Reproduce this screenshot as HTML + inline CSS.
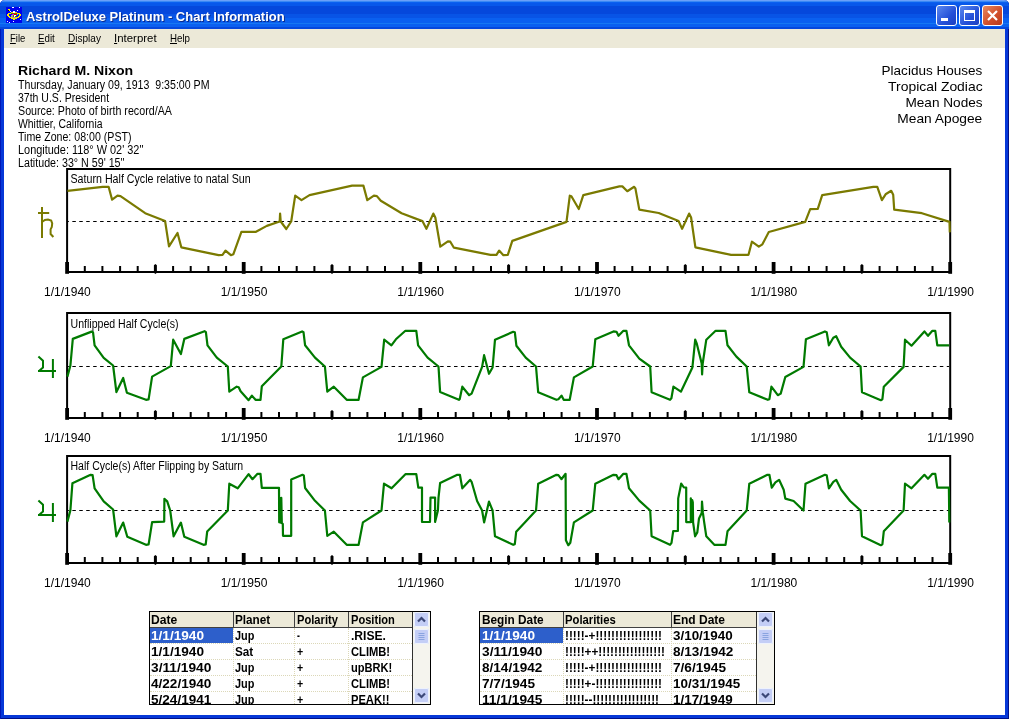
<!DOCTYPE html>
<html><head><meta charset="utf-8"><title>AstrolDeluxe Platinum - Chart Information</title>
<style>
html,body{margin:0;padding:0;}
body{will-change:transform;width:1009px;height:719px;overflow:hidden;background:#fff;position:relative;font-family:"Liberation Sans",sans-serif;color:#000;}
#frame{position:absolute;left:0;top:0;width:1009px;height:719px;background:#0638d8;border-radius:5px 5px 0 0;box-shadow:inset 1px 0 0 #0018b8,inset -1px 0 0 #001088,inset 0 -1px 0 #001088;}
#title{position:absolute;left:0;top:0;width:1009px;height:29px;background:linear-gradient(#6aa0f8 0px,#6aa0f8 1px,#3a88f4 1px,#3a88f4 2px,#0a60f0 2px,#0a60f0 3px,#0858ea 3px,#0858ea 6px,#0548dc 6px,#0548dc 14px,#0854e6 14px,#0854e6 18px,#0a60f0 18px,#0a60f0 23px,#1678f2 23px,#1678f2 24px,#0a60f0 24px,#0a60f0 27px,#0648dc 27px,#0648dc 29px);border-radius:5px 5px 0 0;}
#ttext{transform-origin:0 0;position:absolute;left:26px;top:9px;font-weight:bold;font-size:13px;line-height:16px;color:#fff;white-space:nowrap;text-shadow:1px 1px 0 #0a2a8c;}
#menu{position:absolute;left:4px;top:29px;width:1001px;height:19px;background:#ece9d8;}
#menu span{position:absolute;transform-origin:0 0;display:block;top:3px;font-size:11px;line-height:13px;white-space:nowrap;}
#menu u{text-decoration:underline;}
#client{position:absolute;left:4px;top:48px;width:1001px;height:667px;background:#fff;}
.wb{position:absolute;top:5px;width:21px;height:21px;box-sizing:border-box;border:1px solid #fff;border-radius:3px;}
.info{position:absolute;left:18px;white-space:nowrap;font-size:12px;line-height:13px;transform-origin:0 0;}
.rt{position:absolute;right:26.4px;white-space:nowrap;font-size:13.33px;line-height:16px;text-align:right;transform-origin:100% 0;}
svg text.ct{font-size:12px;font-family:"Liberation Sans",sans-serif;}
svg text.dl{font-size:12px;font-family:"Liberation Sans",sans-serif;}
.tbl{position:absolute;background:#fff;border:1px solid #000;overflow:hidden;font-weight:bold;font-size:12px;}
.hdr{position:absolute;left:0;top:0;height:15px;background:#ece9d8;border-bottom:1px solid #404040;}
.hc{position:absolute;top:0;height:16px;line-height:17px;box-sizing:border-box;border-right:1px solid #404040;white-space:nowrap;overflow:hidden;}
.tbl span{display:inline-block;transform-origin:0 0;}
.c{position:absolute;height:16px;line-height:16px;box-sizing:border-box;white-space:nowrap;overflow:hidden;}
.c.sel{background:#2d5fcb;color:#fff;height:15px;}
.vl{position:absolute;top:16px;width:0;height:80px;border-left:1px dotted #dcd8b8;}
.hl{position:absolute;left:0;height:0;border-top:1px dotted #dcd8b8;}
.sb{position:absolute;top:0;width:18px;height:92px;background:#f5f4ee;border-left:1px solid #303030;box-sizing:border-box;}
.sbtn{position:absolute;width:15px;height:15px;background:#c4cef6;border-radius:2px;box-shadow:inset 0 0 0 1px #eef2fd;}
</style></head><body>
<div id="frame"></div>
<div id="title"></div>
<svg style="position:absolute;left:6px;top:7px" width="16" height="16" viewBox="0 0 16 16" shape-rendering="crispEdges"><rect width="16" height="16" fill="#0000ee"/><rect x="6" y="0" width="2" height="1" fill="#fff"/><rect x="13" y="0" width="1" height="1" fill="#fff"/><rect x="2" y="2" width="2" height="1" fill="#f4ee00"/><rect x="2" y="3" width="1" height="1" fill="#000"/><rect x="3" y="3" width="1" height="1" fill="#f4ee00"/><rect x="11" y="3" width="1" height="1" fill="#fff"/><rect x="4" y="4" width="1" height="1" fill="#fff"/><rect x="7" y="4" width="2" height="1" fill="#fff"/><rect x="5" y="5" width="2" height="1" fill="#f4ee00"/><rect x="7" y="5" width="2" height="1" fill="#fff"/><rect x="9" y="5" width="2" height="1" fill="#f4ee00"/><rect x="2" y="6" width="3" height="1" fill="#f4ee00"/><rect x="5" y="6" width="1" height="1" fill="#00c800"/><rect x="6" y="6" width="1" height="1" fill="#f00000"/><rect x="7" y="6" width="1" height="1" fill="#00c800"/><rect x="8" y="6" width="1" height="1" fill="#f00000"/><rect x="9" y="6" width="1" height="1" fill="#00c800"/><rect x="10" y="6" width="1" height="1" fill="#f00000"/><rect x="11" y="6" width="3" height="1" fill="#f4ee00"/><rect x="1" y="7" width="2" height="1" fill="#f4ee00"/><rect x="6" y="7" width="2" height="1" fill="#f000f0"/><rect x="8" y="7" width="3" height="1" fill="#f00000"/><rect x="11" y="7" width="1" height="1" fill="#00e0f0"/><rect x="13" y="7" width="2" height="1" fill="#f4ee00"/><rect x="1" y="8" width="2" height="1" fill="#f4ee00"/><rect x="5" y="8" width="2" height="1" fill="#a0a0a0"/><rect x="7" y="8" width="1" height="1" fill="#00c800"/><rect x="8" y="8" width="2" height="1" fill="#fff"/><rect x="10" y="8" width="1" height="1" fill="#00c800"/><rect x="13" y="8" width="2" height="1" fill="#f4ee00"/><rect x="2" y="9" width="2" height="1" fill="#f4ee00"/><rect x="5" y="9" width="2" height="1" fill="#a0a0a0"/><rect x="7" y="9" width="1" height="1" fill="#f00000"/><rect x="8" y="9" width="1" height="1" fill="#fff"/><rect x="9" y="9" width="1" height="1" fill="#707000"/><rect x="12" y="9" width="2" height="1" fill="#f4ee00"/><rect x="3" y="10" width="3" height="1" fill="#f4ee00"/><rect x="6" y="10" width="4" height="1" fill="#a0a0a0"/><rect x="10" y="10" width="3" height="1" fill="#f4ee00"/><rect x="5" y="11" width="6" height="1" fill="#f4ee00"/><rect x="7" y="12" width="2" height="1" fill="#f4ee00"/><rect x="14" y="12" width="1" height="1" fill="#fff"/><rect x="1" y="14" width="1" height="1" fill="#fff"/><rect x="7" y="14" width="1" height="1" fill="#fff"/><rect x="3" y="15" width="1" height="1" fill="#fff"/></svg>
<div id="ttext" style="transform:scaleX(0.9973)">AstrolDeluxe Platinum - Chart Information</div>
<div class="wb" style="left:936px;background:linear-gradient(135deg,#5c8af0,#2550d8 60%,#1c3fc0)"><div style="position:absolute;left:4px;top:12px;width:7px;height:3px;background:#fff"></div></div>
<div class="wb" style="left:959px;background:linear-gradient(135deg,#5c8af0,#2550d8 60%,#1c3fc0)"><div style="position:absolute;left:4px;top:4px;width:11px;height:11px;box-sizing:border-box;border:1px solid #fff;border-top:3px solid #fff"></div></div>
<div class="wb" style="left:982px;background:linear-gradient(135deg,#e88a60,#d2502c 55%,#b83a1c)"><svg width="19" height="19" viewBox="0 0 19 19" style="position:absolute;left:0;top:0"><path d="M5 5L14 14M14 5L5 14" stroke="#fff" stroke-width="2.2"/></svg></div>
<div id="menu"><span id="m1" style="transform:scaleX(0.8620);left:5.9px"><u>F</u>ile</span><span id="m2" style="transform:scaleX(0.8857);left:33.7px"><u>E</u>dit</span><span id="m3" style="transform:scaleX(0.9119);left:63.8px"><u>D</u>isplay</span><span id="m4" style="transform:scaleX(1.0394);left:110px"><u>I</u>nterpret</span><span id="m5" style="transform:scaleX(0.8834);left:165.9px"><u>H</u>elp</span></div>
<div id="client"></div>
<div class="info" id="l1" style="transform:scaleX(1.0849);top:63px;font-weight:bold;font-size:13px;line-height:16px;">Richard M. Nixon</div>
<div class="info" id="l2" style="transform:scaleX(0.8842);top:79px">Thursday, January 09, 1913&nbsp; 9:35:00 PM</div>
<div class="info" id="l3" style="transform:scaleX(0.8754);top:92px">37th U.S. President</div>
<div class="info" id="l4" style="transform:scaleX(0.8908);top:105px">Source: Photo of birth record/AA</div>
<div class="info" id="l5" style="transform:scaleX(0.8678);top:118px">Whittier, California</div>
<div class="info" id="l6" style="transform:scaleX(0.8848);top:131px">Time Zone: 08:00 (PST)</div>
<div class="info" id="l7" style="transform:scaleX(0.9087);top:144px">Longitude: 118&deg; W 02' 32''</div>
<div class="info" id="l8" style="transform:scaleX(0.8901);top:157px">Latitude: 33&deg; N 59' 15''</div>
<div class="rt" id="r1" style="transform:scaleX(1.0143);top:63px">Placidus Houses</div>
<div class="rt" id="r2" style="transform:scaleX(1.0428);top:79px">Tropical Zodiac</div>
<div class="rt" id="r3" style="transform:scaleX(1.0201);top:95px">Mean Nodes</div>
<div class="rt" id="r4" style="transform:scaleX(1.0320);top:111px">Mean Apogee</div>
<svg style="position:absolute;left:0;top:0" width="1009" height="719" viewBox="0 0 1009 719">
<rect x="67.1" y="169.0" width="883.1" height="103.0" fill="none" stroke="#000" stroke-width="2"/>
<line x1="68" x2="949" y1="221.5" y2="221.5" stroke="#000" stroke-width="1" stroke-dasharray="3.5 3.44" stroke-dashoffset="2.6"/>
<rect x="65.2" y="262.0" width="3.8" height="11.8" fill="#000"/>
<rect x="83.8" y="266.0" width="2" height="6" fill="#000"/>
<rect x="101.4" y="266.0" width="2" height="6" fill="#000"/>
<rect x="119.1" y="266.0" width="2" height="6" fill="#000"/>
<rect x="136.7" y="266.0" width="2" height="6" fill="#000"/>
<path d="M153.9 265.2 l1.5 -1.2 l1.5 1.2 v7.6 l-1.5 1.2 l-1.5 -1.2z" fill="#000"/>
<rect x="172.1" y="266.0" width="2" height="6" fill="#000"/>
<rect x="189.7" y="266.0" width="2" height="6" fill="#000"/>
<rect x="207.4" y="266.0" width="2" height="6" fill="#000"/>
<rect x="225.1" y="266.0" width="2" height="6" fill="#000"/>
<rect x="241.8" y="262.0" width="3.8" height="11.8" fill="#000"/>
<rect x="260.4" y="266.0" width="2" height="6" fill="#000"/>
<rect x="278.0" y="266.0" width="2" height="6" fill="#000"/>
<rect x="295.7" y="266.0" width="2" height="6" fill="#000"/>
<rect x="313.4" y="266.0" width="2" height="6" fill="#000"/>
<path d="M330.5 265.2 l1.5 -1.2 l1.5 1.2 v7.6 l-1.5 1.2 l-1.5 -1.2z" fill="#000"/>
<rect x="348.7" y="266.0" width="2" height="6" fill="#000"/>
<rect x="366.4" y="266.0" width="2" height="6" fill="#000"/>
<rect x="384.0" y="266.0" width="2" height="6" fill="#000"/>
<rect x="401.7" y="266.0" width="2" height="6" fill="#000"/>
<rect x="418.4" y="262.0" width="3.8" height="11.8" fill="#000"/>
<rect x="437.0" y="266.0" width="2" height="6" fill="#000"/>
<rect x="454.7" y="266.0" width="2" height="6" fill="#000"/>
<rect x="472.3" y="266.0" width="2" height="6" fill="#000"/>
<rect x="490.0" y="266.0" width="2" height="6" fill="#000"/>
<path d="M507.1 265.2 l1.5 -1.2 l1.5 1.2 v7.6 l-1.5 1.2 l-1.5 -1.2z" fill="#000"/>
<rect x="525.3" y="266.0" width="2" height="6" fill="#000"/>
<rect x="543.0" y="266.0" width="2" height="6" fill="#000"/>
<rect x="560.6" y="266.0" width="2" height="6" fill="#000"/>
<rect x="578.3" y="266.0" width="2" height="6" fill="#000"/>
<rect x="595.1" y="262.0" width="3.8" height="11.8" fill="#000"/>
<rect x="613.6" y="266.0" width="2" height="6" fill="#000"/>
<rect x="631.3" y="266.0" width="2" height="6" fill="#000"/>
<rect x="648.9" y="266.0" width="2" height="6" fill="#000"/>
<rect x="666.6" y="266.0" width="2" height="6" fill="#000"/>
<path d="M683.8 265.2 l1.5 -1.2 l1.5 1.2 v7.6 l-1.5 1.2 l-1.5 -1.2z" fill="#000"/>
<rect x="701.9" y="266.0" width="2" height="6" fill="#000"/>
<rect x="719.6" y="266.0" width="2" height="6" fill="#000"/>
<rect x="737.3" y="266.0" width="2" height="6" fill="#000"/>
<rect x="754.9" y="266.0" width="2" height="6" fill="#000"/>
<rect x="771.7" y="262.0" width="3.8" height="11.8" fill="#000"/>
<rect x="790.2" y="266.0" width="2" height="6" fill="#000"/>
<rect x="807.9" y="266.0" width="2" height="6" fill="#000"/>
<rect x="825.6" y="266.0" width="2" height="6" fill="#000"/>
<rect x="843.2" y="266.0" width="2" height="6" fill="#000"/>
<path d="M860.4 265.2 l1.5 -1.2 l1.5 1.2 v7.6 l-1.5 1.2 l-1.5 -1.2z" fill="#000"/>
<rect x="878.6" y="266.0" width="2" height="6" fill="#000"/>
<rect x="896.2" y="266.0" width="2" height="6" fill="#000"/>
<rect x="913.9" y="266.0" width="2" height="6" fill="#000"/>
<rect x="931.5" y="266.0" width="2" height="6" fill="#000"/>
<rect x="948.3" y="262.0" width="3.8" height="11.8" fill="#000"/>
<polyline points="67.5,190.8 102.6,186.8 108.6,186.8 112.1,199.7 117.5,195.7 120.5,196.1 145.2,213.2 165.1,221.1 169.0,246.3 177.5,233.0 181.3,247.3 218.6,255.2 222.5,254.8 225.5,250.6 230.9,255.2 233.4,254.2 241.4,231.8 256.0,231.8 266.8,225.9 279.7,221.5 280.1,213.6 280.7,221.5 286.3,229.0 291.2,221.5 295.2,195.7 301.5,200.1 309.5,195.1 352.1,185.6 363.4,185.6 367.3,200.1 373.9,195.7 376.9,196.1 380.8,200.7 401.6,213.2 422.4,221.1 426.4,228.8 433.3,213.6 435.3,217.5 440.3,246.7 447.9,241.3 450.3,241.7 453.9,247.7 490.5,254.8 496.5,254.8 499.1,250.6 503.4,255.2 507.8,254.8 512.3,240.9 566.5,221.9 569.8,195.7 571.4,196.3 578.8,209.0 583.3,195.1 619.4,186.4 622.4,186.4 627.3,191.2 634.2,186.8 635.4,188.4 639.3,209.6 658.7,213.0 678.6,221.1 682.1,228.8 689.1,213.6 691.1,217.5 695.4,247.3 731.1,254.8 748.5,254.8 751.9,241.7 758.8,246.7 762.4,244.3 768.8,232.0 805.2,221.9 810.2,209.2 817.8,208.8 822.2,195.1 873.3,186.8 877.3,186.8 881.9,200.1 885.6,194.3 891.2,190.8 893.2,194.7 894.2,209.6 921.9,213.2 949.5,221.9 949.8,232.4" fill="none" stroke="#7a7a00" stroke-width="2.2" stroke-linejoin="round" stroke-linecap="butt"/>
<text x="70.5" y="182.9" class="ct" textLength="180.2" lengthAdjust="spacingAndGlyphs">Saturn Half Cycle relative to natal Sun</text>
<text x="67.4" y="295.8" class="dl" text-anchor="middle">1/1/1940</text>
<text x="244.0" y="295.8" class="dl" text-anchor="middle">1/1/1950</text>
<text x="420.6" y="295.8" class="dl" text-anchor="middle">1/1/1960</text>
<text x="597.3" y="295.8" class="dl" text-anchor="middle">1/1/1970</text>
<text x="773.9" y="295.8" class="dl" text-anchor="middle">1/1/1980</text>
<text x="950.5" y="295.8" class="dl" text-anchor="middle">1/1/1990</text>
<rect x="67.1" y="313.0" width="883.1" height="105.0" fill="none" stroke="#000" stroke-width="2"/>
<line x1="68" x2="949" y1="366.5" y2="366.5" stroke="#000" stroke-width="1" stroke-dasharray="3.5 3.44" stroke-dashoffset="2.6"/>
<rect x="65.2" y="408.0" width="3.8" height="11.8" fill="#000"/>
<rect x="83.8" y="412.0" width="2" height="6" fill="#000"/>
<rect x="101.4" y="412.0" width="2" height="6" fill="#000"/>
<rect x="119.1" y="412.0" width="2" height="6" fill="#000"/>
<rect x="136.7" y="412.0" width="2" height="6" fill="#000"/>
<path d="M153.9 411.2 l1.5 -1.2 l1.5 1.2 v7.6 l-1.5 1.2 l-1.5 -1.2z" fill="#000"/>
<rect x="172.1" y="412.0" width="2" height="6" fill="#000"/>
<rect x="189.7" y="412.0" width="2" height="6" fill="#000"/>
<rect x="207.4" y="412.0" width="2" height="6" fill="#000"/>
<rect x="225.1" y="412.0" width="2" height="6" fill="#000"/>
<rect x="241.8" y="408.0" width="3.8" height="11.8" fill="#000"/>
<rect x="260.4" y="412.0" width="2" height="6" fill="#000"/>
<rect x="278.0" y="412.0" width="2" height="6" fill="#000"/>
<rect x="295.7" y="412.0" width="2" height="6" fill="#000"/>
<rect x="313.4" y="412.0" width="2" height="6" fill="#000"/>
<path d="M330.5 411.2 l1.5 -1.2 l1.5 1.2 v7.6 l-1.5 1.2 l-1.5 -1.2z" fill="#000"/>
<rect x="348.7" y="412.0" width="2" height="6" fill="#000"/>
<rect x="366.4" y="412.0" width="2" height="6" fill="#000"/>
<rect x="384.0" y="412.0" width="2" height="6" fill="#000"/>
<rect x="401.7" y="412.0" width="2" height="6" fill="#000"/>
<rect x="418.4" y="408.0" width="3.8" height="11.8" fill="#000"/>
<rect x="437.0" y="412.0" width="2" height="6" fill="#000"/>
<rect x="454.7" y="412.0" width="2" height="6" fill="#000"/>
<rect x="472.3" y="412.0" width="2" height="6" fill="#000"/>
<rect x="490.0" y="412.0" width="2" height="6" fill="#000"/>
<path d="M507.1 411.2 l1.5 -1.2 l1.5 1.2 v7.6 l-1.5 1.2 l-1.5 -1.2z" fill="#000"/>
<rect x="525.3" y="412.0" width="2" height="6" fill="#000"/>
<rect x="543.0" y="412.0" width="2" height="6" fill="#000"/>
<rect x="560.6" y="412.0" width="2" height="6" fill="#000"/>
<rect x="578.3" y="412.0" width="2" height="6" fill="#000"/>
<rect x="595.1" y="408.0" width="3.8" height="11.8" fill="#000"/>
<rect x="613.6" y="412.0" width="2" height="6" fill="#000"/>
<rect x="631.3" y="412.0" width="2" height="6" fill="#000"/>
<rect x="648.9" y="412.0" width="2" height="6" fill="#000"/>
<rect x="666.6" y="412.0" width="2" height="6" fill="#000"/>
<path d="M683.8 411.2 l1.5 -1.2 l1.5 1.2 v7.6 l-1.5 1.2 l-1.5 -1.2z" fill="#000"/>
<rect x="701.9" y="412.0" width="2" height="6" fill="#000"/>
<rect x="719.6" y="412.0" width="2" height="6" fill="#000"/>
<rect x="737.3" y="412.0" width="2" height="6" fill="#000"/>
<rect x="754.9" y="412.0" width="2" height="6" fill="#000"/>
<rect x="771.7" y="408.0" width="3.8" height="11.8" fill="#000"/>
<rect x="790.2" y="412.0" width="2" height="6" fill="#000"/>
<rect x="807.9" y="412.0" width="2" height="6" fill="#000"/>
<rect x="825.6" y="412.0" width="2" height="6" fill="#000"/>
<rect x="843.2" y="412.0" width="2" height="6" fill="#000"/>
<path d="M860.4 411.2 l1.5 -1.2 l1.5 1.2 v7.6 l-1.5 1.2 l-1.5 -1.2z" fill="#000"/>
<rect x="878.6" y="412.0" width="2" height="6" fill="#000"/>
<rect x="896.2" y="412.0" width="2" height="6" fill="#000"/>
<rect x="913.9" y="412.0" width="2" height="6" fill="#000"/>
<rect x="931.5" y="412.0" width="2" height="6" fill="#000"/>
<rect x="948.3" y="408.0" width="3.8" height="11.8" fill="#000"/>
<polyline points="67.4,376.6 70.4,365.5 72.8,338.9 91.6,331.6 93.0,332.2 94.6,345.3 103.7,357.8 113.1,365.5 116.4,392.1 123.2,378.0 126.9,392.7 146.0,399.8 148.6,399.4 152.1,376.6 170.8,366.1 173.2,339.7 180.9,354.0 184.3,338.9 204.5,331.2 205.9,332.2 207.5,345.3 216.8,357.6 227.8,366.5 229.3,391.7 236.7,386.7 238.7,387.3 240.6,391.3 248.6,400.2 251.9,395.6 255.5,399.8 260.5,399.8 261.8,386.3 281.3,366.5 283.3,339.3 302.1,331.4 303.5,332.2 305.1,345.3 315.0,357.6 324.9,366.5 327.3,391.7 333.8,386.7 346.7,399.8 358.6,399.8 362.9,377.4 381.5,366.9 384.2,339.7 391.4,345.3 395.9,339.3 405.4,330.8 416.3,330.8 418.1,345.3 427.6,357.6 438.5,366.5 440.1,391.9 458.9,399.8 459.7,399.2 462.3,386.7 469.2,395.2 471.6,393.6 482.1,366.9 484.1,355.2 489.0,373.8 492.6,367.5 495.0,339.7 513.2,331.8 514.8,332.2 516.4,345.7 525.7,357.6 536.0,366.5 538.2,392.3 556.4,399.8 558.4,399.2 561.5,395.6 563.7,399.8 569.7,399.8 573.9,377.4 592.7,366.5 595.3,339.3 613.5,331.4 616.5,331.8 618.5,335.8 623.4,330.8 626.4,330.8 629.0,345.3 639.3,358.6 650.2,366.5 651.6,392.3 670.0,399.8 671.4,398.2 673.4,386.7 680.9,391.7 692.4,367.5 695.2,339.7 696.8,343.7 701.7,363.5 702.1,374.4 702.7,363.5 706.3,339.7 715.6,330.8 725.5,330.8 727.5,345.3 736.4,356.6 746.7,366.5 749.3,392.3 767.8,399.8 769.4,399.2 771.4,386.7 777.8,395.2 780.7,393.6 785.3,377.0 803.5,366.9 805.9,339.3 824.9,331.4 826.7,332.2 828.9,345.3 833.3,337.8 836.2,336.2 841.2,346.7 850.1,357.6 860.6,366.5 862.0,392.3 880.8,400.2 882.4,399.2 883.8,386.7 903.6,366.9 905.0,339.7 911.5,345.7 924.4,331.4 928.0,335.8 932.4,330.8 935.3,330.8 937.3,345.3 949.2,345.3" fill="none" stroke="#007a00" stroke-width="2.2" stroke-linejoin="round" stroke-linecap="butt"/>
<text x="70.5" y="327.9" class="ct" textLength="108.1" lengthAdjust="spacingAndGlyphs">Unflipped Half Cycle(s)</text>
<text x="67.4" y="441.8" class="dl" text-anchor="middle">1/1/1940</text>
<text x="244.0" y="441.8" class="dl" text-anchor="middle">1/1/1950</text>
<text x="420.6" y="441.8" class="dl" text-anchor="middle">1/1/1960</text>
<text x="597.3" y="441.8" class="dl" text-anchor="middle">1/1/1970</text>
<text x="773.9" y="441.8" class="dl" text-anchor="middle">1/1/1980</text>
<text x="950.5" y="441.8" class="dl" text-anchor="middle">1/1/1990</text>
<rect x="67.1" y="456.0" width="883.1" height="107.0" fill="none" stroke="#000" stroke-width="2"/>
<line x1="68" x2="949" y1="510.5" y2="510.5" stroke="#000" stroke-width="1" stroke-dasharray="3.5 3.44" stroke-dashoffset="2.6"/>
<rect x="65.2" y="553.0" width="3.8" height="11.8" fill="#000"/>
<rect x="83.8" y="557.0" width="2" height="6" fill="#000"/>
<rect x="101.4" y="557.0" width="2" height="6" fill="#000"/>
<rect x="119.1" y="557.0" width="2" height="6" fill="#000"/>
<rect x="136.7" y="557.0" width="2" height="6" fill="#000"/>
<path d="M153.9 556.2 l1.5 -1.2 l1.5 1.2 v7.6 l-1.5 1.2 l-1.5 -1.2z" fill="#000"/>
<rect x="172.1" y="557.0" width="2" height="6" fill="#000"/>
<rect x="189.7" y="557.0" width="2" height="6" fill="#000"/>
<rect x="207.4" y="557.0" width="2" height="6" fill="#000"/>
<rect x="225.1" y="557.0" width="2" height="6" fill="#000"/>
<rect x="241.8" y="553.0" width="3.8" height="11.8" fill="#000"/>
<rect x="260.4" y="557.0" width="2" height="6" fill="#000"/>
<rect x="278.0" y="557.0" width="2" height="6" fill="#000"/>
<rect x="295.7" y="557.0" width="2" height="6" fill="#000"/>
<rect x="313.4" y="557.0" width="2" height="6" fill="#000"/>
<path d="M330.5 556.2 l1.5 -1.2 l1.5 1.2 v7.6 l-1.5 1.2 l-1.5 -1.2z" fill="#000"/>
<rect x="348.7" y="557.0" width="2" height="6" fill="#000"/>
<rect x="366.4" y="557.0" width="2" height="6" fill="#000"/>
<rect x="384.0" y="557.0" width="2" height="6" fill="#000"/>
<rect x="401.7" y="557.0" width="2" height="6" fill="#000"/>
<rect x="418.4" y="553.0" width="3.8" height="11.8" fill="#000"/>
<rect x="437.0" y="557.0" width="2" height="6" fill="#000"/>
<rect x="454.7" y="557.0" width="2" height="6" fill="#000"/>
<rect x="472.3" y="557.0" width="2" height="6" fill="#000"/>
<rect x="490.0" y="557.0" width="2" height="6" fill="#000"/>
<path d="M507.1 556.2 l1.5 -1.2 l1.5 1.2 v7.6 l-1.5 1.2 l-1.5 -1.2z" fill="#000"/>
<rect x="525.3" y="557.0" width="2" height="6" fill="#000"/>
<rect x="543.0" y="557.0" width="2" height="6" fill="#000"/>
<rect x="560.6" y="557.0" width="2" height="6" fill="#000"/>
<rect x="578.3" y="557.0" width="2" height="6" fill="#000"/>
<rect x="595.1" y="553.0" width="3.8" height="11.8" fill="#000"/>
<rect x="613.6" y="557.0" width="2" height="6" fill="#000"/>
<rect x="631.3" y="557.0" width="2" height="6" fill="#000"/>
<rect x="648.9" y="557.0" width="2" height="6" fill="#000"/>
<rect x="666.6" y="557.0" width="2" height="6" fill="#000"/>
<path d="M683.8 556.2 l1.5 -1.2 l1.5 1.2 v7.6 l-1.5 1.2 l-1.5 -1.2z" fill="#000"/>
<rect x="701.9" y="557.0" width="2" height="6" fill="#000"/>
<rect x="719.6" y="557.0" width="2" height="6" fill="#000"/>
<rect x="737.3" y="557.0" width="2" height="6" fill="#000"/>
<rect x="754.9" y="557.0" width="2" height="6" fill="#000"/>
<rect x="771.7" y="553.0" width="3.8" height="11.8" fill="#000"/>
<rect x="790.2" y="557.0" width="2" height="6" fill="#000"/>
<rect x="807.9" y="557.0" width="2" height="6" fill="#000"/>
<rect x="825.6" y="557.0" width="2" height="6" fill="#000"/>
<rect x="843.2" y="557.0" width="2" height="6" fill="#000"/>
<path d="M860.4 556.2 l1.5 -1.2 l1.5 1.2 v7.6 l-1.5 1.2 l-1.5 -1.2z" fill="#000"/>
<rect x="878.6" y="557.0" width="2" height="6" fill="#000"/>
<rect x="896.2" y="557.0" width="2" height="6" fill="#000"/>
<rect x="913.9" y="557.0" width="2" height="6" fill="#000"/>
<rect x="931.5" y="557.0" width="2" height="6" fill="#000"/>
<rect x="948.3" y="553.0" width="3.8" height="11.8" fill="#000"/>
<polyline points="67.4,521.6 70.4,510.1 72.4,483.3 90.6,474.8 92.6,475.2 94.6,488.3 103.7,501.4 113.1,509.5 116.4,536.3 123.2,522.6 127.3,536.7 146.0,544.8 148.6,544.4 152.1,522.2 164.2,521.6 164.4,498.8 167.2,501.4 170.2,510.5 173.6,536.3 180.9,522.6 184.3,536.7 203.5,544.8 205.7,544.4 207.2,531.5 227.8,510.5 229.3,483.7 237.7,488.3 248.6,474.2 252.5,479.2 257.5,473.8 260.5,473.8 261.8,487.8 279.0,487.8 279.2,522.3 280.0,497.8 280.6,522.6 281.3,497.8 281.8,522.9 282.8,524.0 283.0,535.8 291.2,535.8 291.2,479.4 302.5,474.8 303.8,475.4 305.1,488.0 315.0,500.8 324.9,510.5 327.3,535.9 333.8,531.7 346.7,544.8 358.6,544.8 362.9,522.4 381.5,510.5 384.0,483.7 391.6,488.3 405.4,474.2 416.3,474.2 418.3,487.7 422.0,487.7 422.0,522.0 430.0,522.0 430.5,497.6 435.1,497.6 435.1,522.0 437.9,510.5 438.5,497.6 440.1,483.1 457.3,474.8 459.9,474.8 462.3,488.3 470.2,479.8 471.6,481.8 477.1,501.0 482.1,510.5 484.1,522.4 489.0,501.6 492.6,510.5 495.0,536.3 513.2,544.8 514.8,544.2 516.2,531.7 536.0,510.5 538.2,483.7 556.4,474.8 558.4,475.2 561.4,479.2 565.6,473.8 565.9,540.2 568.3,545.2 570.3,542.7 573.9,522.4 592.7,510.5 595.3,483.7 613.5,474.8 616.5,475.2 618.5,479.2 623.4,473.8 626.4,473.8 629.0,488.3 639.3,500.6 650.2,510.5 651.6,536.3 670.0,544.8 671.5,542.8 673.2,531.2 677.9,531.0 678.2,498.4 681.2,483.5 683.9,487.5 686.2,487.5 686.2,522.1 690.8,522.1 690.8,498.3 691.6,522.0 692.2,500.0 692.8,502.3 693.1,522.3 695.1,536.3 697.3,532.4 699.0,518.4 701.7,512.9 702.0,501.5 702.9,512.9 704.2,522.3 706.3,536.3 714.3,544.8 725.5,544.8 727.5,531.3 746.7,510.5 749.3,483.7 767.4,474.8 769.4,474.8 771.8,487.7 775.4,482.4 779.1,479.8 783.7,489.7 785.3,498.6 793.6,501.0 803.5,510.5 805.5,483.7 824.9,474.8 826.7,475.2 828.9,488.3 833.3,481.8 836.2,479.8 841.2,489.7 850.1,501.0 860.6,510.5 862.0,536.3 880.8,545.2 882.4,544.2 883.8,531.3 903.6,510.5 905.0,483.7 911.5,488.3 924.4,474.8 928.0,478.8 932.4,473.8 935.3,473.8 937.3,487.7 948.9,487.7 949.3,522.4" fill="none" stroke="#007a00" stroke-width="2.2" stroke-linejoin="round" stroke-linecap="butt"/>
<text x="70.5" y="469.7" class="ct" textLength="172.6" lengthAdjust="spacingAndGlyphs">Half Cycle(s) After Flipping by Saturn</text>
<text x="67.4" y="586.8" class="dl" text-anchor="middle">1/1/1940</text>
<text x="244.0" y="586.8" class="dl" text-anchor="middle">1/1/1950</text>
<text x="420.6" y="586.8" class="dl" text-anchor="middle">1/1/1960</text>
<text x="597.3" y="586.8" class="dl" text-anchor="middle">1/1/1970</text>
<text x="773.9" y="586.8" class="dl" text-anchor="middle">1/1/1980</text>
<text x="950.5" y="586.8" class="dl" text-anchor="middle">1/1/1990</text>
<g fill="none" stroke="#7a7a00" stroke-width="2"><path d="M42 207 V238"/><path d="M38 213 H49.2"/><path d="M42 222 L44.9 220 L48 219.6 L51.2 220.6 L52.2 223.3 L51.8 227 L50.6 229.4 L50.6 234 L53.4 237"/></g>
<g fill="none" stroke="#007a00" stroke-width="2" transform="translate(0,0.0)"><path d="M38.4 356.5 L43 360.7 V367.6 L39 371"/><path d="M38 371 H56"/><path d="M52.9 359 V378"/></g>
<g fill="none" stroke="#007a00" stroke-width="2" transform="translate(0,144.0)"><path d="M38.4 356.5 L43 360.7 V367.6 L39 371"/><path d="M38 371 H56"/><path d="M52.9 359 V378"/></g>
</svg>
<div class="tbl" style="left:149px;top:611px;width:280px;height:92px">
<div class="hdr" style="width:262px"></div>
<div class="hc" style="left:0px;width:84px;padding-left:1.3px"><span id="ah0" style="transform:scaleX(1.0071)">Date</span></div>
<div class="hc" style="left:84px;width:61px;padding-left:1.2px"><span id="ah1" style="transform:scaleX(0.9774)">Planet</span></div>
<div class="hc" style="left:145px;width:54px;padding-left:1.5px"><span id="ah2" style="transform:scaleX(0.9292)">Polarity</span></div>
<div class="hc" style="left:199px;width:64px;padding-left:1.5px"><span id="ah3" style="transform:scaleX(0.9251)">Position</span></div>
<div class="c sel" style="left:0px;top:16px;width:83px;padding-left:1.3px"><span id="ar0c0" style="transform:scaleX(1.1344)">1/1/1940</span></div>
<div class="c" style="left:84px;top:16px;width:60px;padding-left:1.2px"><span id="ar0c1" style="transform:scaleX(0.9089)">Jup</span></div>
<div class="c" style="left:145px;top:16px;width:53px;padding-left:1.5px"><span id="ar0c2" style="transform:scaleX(0.7250)">-</span></div>
<div class="c" style="left:199px;top:16px;width:63px;padding-left:1.5px"><span id="ar0c3" style="transform:scaleX(1.0090)">.RISE.</span></div>
<div class="c" style="left:0px;top:32px;width:83px;padding-left:1.3px"><span id="ar1c0" style="transform:scaleX(1.1344)">1/1/1940</span></div>
<div class="c" style="left:84px;top:32px;width:60px;padding-left:1.2px"><span id="ar1c1" style="transform:scaleX(0.9793)">Sat</span></div>
<div class="c" style="left:145px;top:32px;width:53px;padding-left:1.5px"><span id="ar1c2" style="transform:scaleX(0.8837)">+</span></div>
<div class="c" style="left:199px;top:32px;width:63px;padding-left:1.5px"><span id="ar1c3" style="transform:scaleX(0.9310)">CLIMB!</span></div>
<div class="c" style="left:0px;top:48px;width:83px;padding-left:1.3px"><span id="ar2c0" style="transform:scaleX(1.1435)">3/11/1940</span></div>
<div class="c" style="left:84px;top:48px;width:60px;padding-left:1.2px"><span id="ar2c1" style="transform:scaleX(0.9089)">Jup</span></div>
<div class="c" style="left:145px;top:48px;width:53px;padding-left:1.5px"><span id="ar2c2" style="transform:scaleX(0.8837)">+</span></div>
<div class="c" style="left:199px;top:48px;width:63px;padding-left:1.5px"><span id="ar2c3" style="transform:scaleX(0.9248)">upBRK!</span></div>
<div class="c" style="left:0px;top:64px;width:83px;padding-left:1.3px"><span id="ar3c0" style="transform:scaleX(1.1294)">4/22/1940</span></div>
<div class="c" style="left:84px;top:64px;width:60px;padding-left:1.2px"><span id="ar3c1" style="transform:scaleX(0.9089)">Jup</span></div>
<div class="c" style="left:145px;top:64px;width:53px;padding-left:1.5px"><span id="ar3c2" style="transform:scaleX(0.8837)">+</span></div>
<div class="c" style="left:199px;top:64px;width:63px;padding-left:1.5px"><span id="ar3c3" style="transform:scaleX(0.9310)">CLIMB!</span></div>
<div class="c" style="left:0px;top:80px;width:83px;padding-left:1.3px"><span id="ar4c0" style="transform:scaleX(1.1294)">5/24/1941</span></div>
<div class="c" style="left:84px;top:80px;width:60px;padding-left:1.2px"><span id="ar4c1" style="transform:scaleX(0.9089)">Jup</span></div>
<div class="c" style="left:145px;top:80px;width:53px;padding-left:1.5px"><span id="ar4c2" style="transform:scaleX(0.8837)">+</span></div>
<div class="c" style="left:199px;top:80px;width:63px;padding-left:1.5px"><span id="ar4c3" style="transform:scaleX(0.9288)">PEAK!!</span></div>
<div class="vl" style="left:83px"></div>
<div class="vl" style="left:144px"></div>
<div class="vl" style="left:198px"></div>
<div class="hl" style="top:31px;width:262px"></div>
<div class="hl" style="top:47px;width:262px"></div>
<div class="hl" style="top:63px;width:262px"></div>
<div class="hl" style="top:79px;width:262px"></div>
<div class="sb" style="left:262px"></div>
<div class="sbtn" style="left:264px;top:0px"><svg width="15" height="15" viewBox="0 0 15 15"><path d="M4 9.5 L7.5 6 L11 9.5" fill="none" stroke="#3c4878" stroke-width="2.2"/></svg></div>
<div class="sbtn thumb" style="left:264px;top:17px"><svg width="15" height="15" viewBox="0 0 15 15"><path d="M4.5 4.5H10.5M4.5 6.5H10.5M4.5 8.5H10.5M4.5 10.5H10.5" stroke="#8aa4e0" stroke-width="1"/></svg></div>
<div class="sbtn" style="left:264px;top:76px"><svg width="15" height="15" viewBox="0 0 15 15"><path d="M4 5.5 L7.5 9 L11 5.5" fill="none" stroke="#3c4878" stroke-width="2.2"/></svg></div>
</div>
<div class="tbl" style="left:479px;top:611px;width:294px;height:92px">
<div class="hdr" style="width:276px"></div>
<div class="hc" style="left:0px;width:84px;padding-left:1.5px"><span id="bh0" style="transform:scaleX(0.9842)">Begin Date</span></div>
<div class="hc" style="left:84px;width:108px;padding-left:1.0px"><span id="bh1" style="transform:scaleX(0.9402)">Polarities</span></div>
<div class="hc" style="left:192px;width:85px;padding-left:1.2px"><span id="bh2" style="transform:scaleX(0.9997)">End Date</span></div>
<div class="c sel" style="left:0px;top:16px;width:83px;padding-left:1.5px"><span id="br0c0" style="transform:scaleX(1.1344)">1/1/1940</span></div>
<div class="c" style="left:84px;top:16px;width:107px;padding-left:1.0px"><span id="br0c1" style="transform:scaleX(0.9806)">!!!!!-+!!!!!!!!!!!!!!!!!</span></div>
<div class="c" style="left:192px;top:16px;width:84px;padding-left:1.2px"><span id="br0c2" style="transform:scaleX(1.1182)">3/10/1940</span></div>
<div class="c" style="left:0px;top:32px;width:83px;padding-left:1.5px"><span id="br1c0" style="transform:scaleX(1.1435)">3/11/1940</span></div>
<div class="c" style="left:84px;top:32px;width:107px;padding-left:1.0px"><span id="br1c1" style="transform:scaleX(0.9810)">!!!!!++!!!!!!!!!!!!!!!!!</span></div>
<div class="c" style="left:192px;top:32px;width:84px;padding-left:1.2px"><span id="br1c2" style="transform:scaleX(1.1313)">8/13/1942</span></div>
<div class="c" style="left:0px;top:48px;width:83px;padding-left:1.5px"><span id="br2c0" style="transform:scaleX(1.1294)">8/14/1942</span></div>
<div class="c" style="left:84px;top:48px;width:107px;padding-left:1.0px"><span id="br2c1" style="transform:scaleX(0.9806)">!!!!!-+!!!!!!!!!!!!!!!!!</span></div>
<div class="c" style="left:192px;top:48px;width:84px;padding-left:1.2px"><span id="br2c2" style="transform:scaleX(1.1344)">7/6/1945</span></div>
<div class="c" style="left:0px;top:64px;width:83px;padding-left:1.5px"><span id="br3c0" style="transform:scaleX(1.1344)">7/7/1945</span></div>
<div class="c" style="left:84px;top:64px;width:107px;padding-left:1.0px"><span id="br3c1" style="transform:scaleX(0.9806)">!!!!!+-!!!!!!!!!!!!!!!!!</span></div>
<div class="c" style="left:192px;top:64px;width:84px;padding-left:1.2px"><span id="br3c2" style="transform:scaleX(1.1188)">10/31/1945</span></div>
<div class="c" style="left:0px;top:80px;width:83px;padding-left:1.5px"><span id="br4c0" style="transform:scaleX(1.1435)">11/1/1945</span></div>
<div class="c" style="left:84px;top:80px;width:107px;padding-left:1.0px"><span id="br4c1" style="transform:scaleX(0.9801)">!!!!!--!!!!!!!!!!!!!!!!!</span></div>
<div class="c" style="left:192px;top:80px;width:84px;padding-left:1.2px"><span id="br4c2" style="transform:scaleX(1.1182)">1/17/1949</span></div>
<div class="vl" style="left:83px"></div>
<div class="vl" style="left:191px"></div>
<div class="hl" style="top:31px;width:276px"></div>
<div class="hl" style="top:47px;width:276px"></div>
<div class="hl" style="top:63px;width:276px"></div>
<div class="hl" style="top:79px;width:276px"></div>
<div class="sb" style="left:276px"></div>
<div class="sbtn" style="left:278px;top:0px"><svg width="15" height="15" viewBox="0 0 15 15"><path d="M4 9.5 L7.5 6 L11 9.5" fill="none" stroke="#3c4878" stroke-width="2.2"/></svg></div>
<div class="sbtn thumb" style="left:278px;top:17px"><svg width="15" height="15" viewBox="0 0 15 15"><path d="M4.5 4.5H10.5M4.5 6.5H10.5M4.5 8.5H10.5M4.5 10.5H10.5" stroke="#8aa4e0" stroke-width="1"/></svg></div>
<div class="sbtn" style="left:278px;top:76px"><svg width="15" height="15" viewBox="0 0 15 15"><path d="M4 5.5 L7.5 9 L11 5.5" fill="none" stroke="#3c4878" stroke-width="2.2"/></svg></div>
</div>
</body></html>
